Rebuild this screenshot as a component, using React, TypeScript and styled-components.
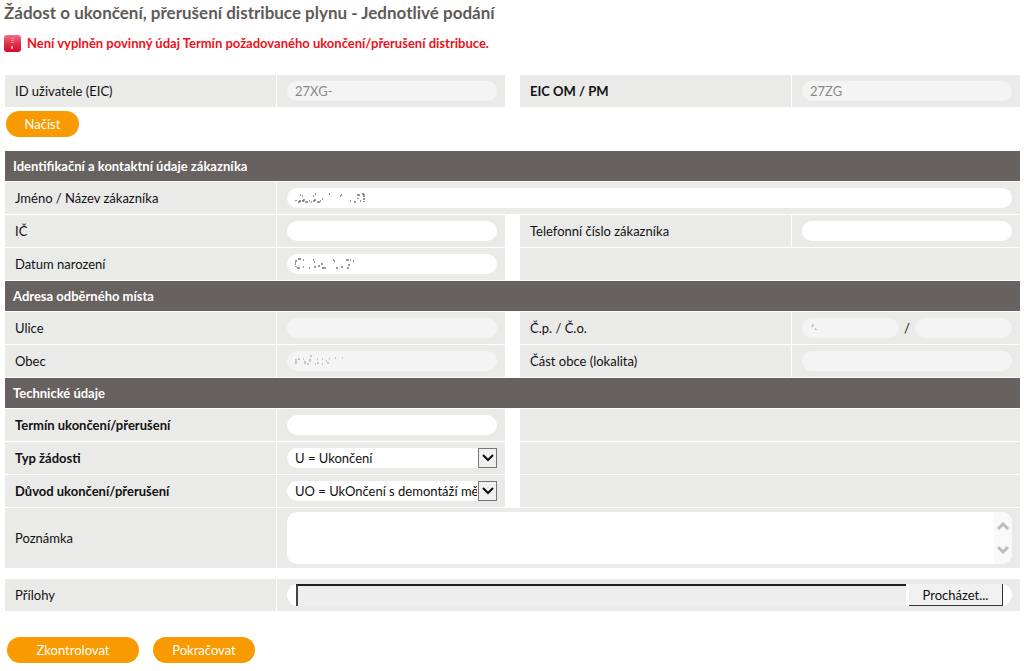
import React from 'react';
import styled, { createGlobalStyle } from 'styled-components';

const GlobalStyle = createGlobalStyle`
  *, *::before, *::after { box-sizing: border-box; }
  body {
    margin: 0;
    background: #fff;
    color: #111;
    font: 13px/16px Lato, 'Open Sans', sans-serif;
  }
  input, select, textarea, button { font: inherit; color: inherit; }
`;

const Page = styled.main`
  padding: 4px 4px 8px;
`;

const Form = styled.form`
  padding-left: 1px;
`;

const Title = styled.h1`
  margin: 0;
  color: #5f5b58;
  font-size: 17px;
  line-height: 18px;
  font-weight: 700;
`;

const Alert = styled.p`
  display: flex;
  align-items: center;
  gap: 6px;
  margin: 12px 0 23px;
  color: #f0101a;
  font-weight: 700;
  line-height: 18px;
`;

const Row = styled.div<{ $tall?: boolean }>`
  display: grid;
  grid-template-columns:
    minmax(0, 272fr) minmax(0, 228fr) 15px minmax(0, 272fr) minmax(0, 228fr);
  min-height: ${(p) => (p.$tall ? 60 : 32)}px;
  margin-bottom: 1px;
`;

const LabelCell = styled.label<{ $strong?: boolean; $second?: boolean }>`
  display: flex;
  align-items: center;
  grid-column: ${(p) => (p.$second ? 4 : 1)};
  padding: 0 10px;
  border-right: 1px solid #fff;
  background: #eaeae9;
  font-weight: ${(p) => (p.$strong ? 700 : 400)};
`;

const FieldCell = styled.div<{ $wide?: boolean; $second?: boolean }>`
  display: flex;
  align-items: center;
  position: relative;
  grid-column: ${(p) => (p.$wide ? '2 / -1' : p.$second ? '5' : '2')};
  gap: 5px;
  padding: 0 8px 0 10px;
  background: #eaeae9;
`;

const EmptyCell = styled.div`
  grid-column: 4 / -1;
  background: #eaeae9;
`;

const SectionBar = styled.h2`
  margin: 0 0 1px;
  padding: 0 8px;
  background: #67625f;
  color: #fff;
  font-size: 13px;
  line-height: 30px;
  font-weight: 700;
`;

const TextInput = styled.input`
  flex: 1;
  width: 0;
  min-width: 0;
  height: 20px;
  padding: 0 8px;
  border: 0;
  border-radius: 10px;
  outline: 0;
  background: #fff;

  &:disabled {
    background: #f4f4f4;
    color: #8a8a8a;
  }
`;

const SelectBox = styled.div`
  display: flex;
  flex: 1;
  min-width: 0;
  height: 20px;
  border-radius: 10px 0 0 10px;
  background: #fff;
  position: relative;
`;

const Select = styled.select`
  appearance: none;
  width: 100%;
  padding: 0 20px 0 8px;
  border: 0;
  outline: 0;
  background: transparent;
`;

const SelectArrow = styled.span`
  display: grid;
  place-items: center;
  position: absolute;
  inset: 0 0 0 auto;
  width: 19px;
  border: 1px solid #77777a;
  background: #f0f0f0;
  pointer-events: none;
`;

const NoteBox = styled.div`
  display: flex;
  flex: 1;
  height: 52px;
  overflow: hidden;
  border-radius: 10px;
  background: #fff;
`;

const Note = styled.textarea`
  flex: 1;
  padding: 2px 8px;
  border: 0;
  outline: 0;
  resize: none;
  background: transparent;
`;

const ScrollTrack = styled.div`
  display: flex;
  flex-direction: column;
  align-items: center;
  justify-content: space-between;
  width: 18px;
  padding: 10px 0;
  background: #f9f9f9;
`;

const FileBox = styled.div`
  display: flex;
  flex: 1;
  gap: 3px;
  height: 22px;
  padding: 0 9px;
  border-radius: 11px;
  background: #fff;
`;

const FileName = styled.input`
  flex: 1;
  min-width: 0;
  border: 0;
  border-top: 2px solid #222;
  border-left: 2px solid #444;
  outline: 0;
  background: #eee;
`;

const BrowseButton = styled.button`
  width: 94px;
  padding: 0;
  border: 0;
  border-right: 1px solid #333;
  border-bottom: 1px solid #333;
  background: #f0f0f0;
`;

const PillButton = styled.button<{ $width: number }>`
  width: ${(p) => p.$width}px;
  height: 26px;
  padding: 0;
  border: 0;
  border-radius: 13px;
  background: #f89a00;
  color: #fff;
`;

const LoadBar = styled.div`
  display: flex;
  padding: 3px 1px 14px;
`;

const Attachments = styled.div`
  margin-top: 11px;
`;

const Actions = styled.div`
  display: flex;
  gap: 14px;
  padding: 25px 2px 0;
`;

const Smudge = styled.svg`
  position: absolute;
  left: 18px;
  top: 50%;
  transform: translateY(-50%);
  pointer-events: none;
`;

/* Remains of blanked-out personal data inside a field. */
const marks = {
  name: 'M1 10v1M3 12h2M5 10v2M7 11h2M9 9v2M10 12h3M14 11h1M16 12h1M18 11h2M20 9v2M22 12h3M25 11h1M27 9h1M5 5h1M7 6h1M18 6h1M20 4h1M34 4h1M46 5h1M45 6h1M55 11h1M59 12h2M62 5h3M63 8v1M65 11h1M67 4h2M69 4v3M68 9h2M69 11v1',
  born: 'M3 3h3M1 4v2M0 6v3M1 10v1M2 12h3M8 4h1M8 11h1M14 12h1M18 4h1M19 6h1M19 11h2M24 9v2M26 8h2M27 12h4M38 4h1M39 5h1M41 12h2M46 11h2M51 4h3M55 4h1M54 8v2M52 12h2M58 5h1',
  town: 'M1 6v5M3 6h2M8 6h1M10 8v3M12 11h2M15 6v3M16 2v2M20 11h1M22 6h1M23 9v2M27 6h1M27 11h1M31 8h1M32 10h2M34 6h1M40 5h1M47 5h1',
  house: 'M3 4v2M2 6v1M5 9h1M6 9v1',
};

const Remains = ({ kind, light }: { kind: keyof typeof marks; light?: boolean }) => (
  <Smudge width="72" height="16" viewBox="0 0 72 16" aria-hidden="true">
    <path d={marks[kind]} stroke={light ? '#999' : '#333'} fill="none" />
  </Smudge>
);

const Chevron = ({ up, pale }: { up?: boolean; pale?: boolean }) => (
  <svg width="12" height="8" viewBox="0 0 12 8" aria-hidden="true">
    <path
      d={up ? 'M1 7l5-5 5 5' : 'M1 1l5 5 5-5'}
      fill="none"
      stroke={pale ? '#bdbdbd' : '#111'}
      strokeWidth={pale ? 3 : 2}
    />
  </svg>
);

const AlertIcon = () => (
  <svg width="17" height="17" viewBox="0 0 17 17" aria-hidden="true">
    <defs>
      <linearGradient id="alertFill" x1="0" y1="0" x2="0" y2="1">
        <stop offset="0" stopColor="#ef7187" />
        <stop offset="0.5" stopColor="#e2304d" />
        <stop offset="1" stopColor="#d5082a" />
      </linearGradient>
    </defs>
    <rect width="17" height="17" rx="3" fill="url(#alertFill)" />
    <path d="M7 3.5h3M7 5.5h3M7 7.5h3" stroke="#f08c9c" />
    <rect x="7" y="11" width="2" height="3" rx="1" fill="#f9cdd4" />
  </svg>
);

type FieldProps = {
  id: string;
  label: string;
  strong?: boolean;
  second?: boolean;
  wide?: boolean;
  children: React.ReactNode;
};

const Field = ({ id, label, strong, second, wide, children }: FieldProps) => (
  <>
    <LabelCell htmlFor={id} $strong={strong} $second={second}>{label}</LabelCell>
    <FieldCell $second={second} $wide={wide}>{children}</FieldCell>
  </>
);

const DropDown = ({ id, option }: { id: string; option: string }) => (
  <SelectBox>
    <Select id={id}><option>{option}</option></Select>
    <SelectArrow><Chevron /></SelectArrow>
  </SelectBox>
);

export default function App() {
  return (
    <Page>
      <GlobalStyle />
      <Title>Žádost o ukončení, přerušení distribuce plynu - Jednotlivé podání</Title>
      <Alert role="alert">
        <AlertIcon />
        Není vyplněn povinný údaj Termín požadovaného ukončení/přerušení distribuce.
      </Alert>

      <Form onSubmit={(e) => e.preventDefault()}>
        <Row>
          <Field id="user" label="ID uživatele (EIC)"><TextInput id="user" disabled defaultValue="27XG-" /></Field>
          <Field id="eic" label="EIC OM / PM" strong second><TextInput id="eic" disabled defaultValue="27ZG" /></Field>
        </Row>
        <LoadBar><PillButton type="button" $width={73}>Načíst</PillButton></LoadBar>

        <SectionBar>Identifikační a kontaktní údaje zákazníka</SectionBar>
        <Row>
          <Field id="name" label="Jméno / Název zákazníka" wide><TextInput id="name" /><Remains kind="name" /></Field>
        </Row>
        <Row>
          <Field id="ic" label="IČ"><TextInput id="ic" /></Field>
          <Field id="phone" label="Telefonní číslo zákazníka" second><TextInput id="phone" /></Field>
        </Row>
        <Row>
          <Field id="born" label="Datum narození"><TextInput id="born" /><Remains kind="born" /></Field>
          <EmptyCell />
        </Row>

        <SectionBar>Adresa odběrného místa</SectionBar>
        <Row>
          <Field id="street" label="Ulice"><TextInput id="street" disabled /></Field>
          <Field id="house" label="Č.p. / Č.o." second>
            <TextInput id="house" disabled />
            <span>/</span>
            <TextInput aria-label="Č.o." disabled />
            <Remains kind="house" light />
          </Field>
        </Row>
        <Row>
          <Field id="town" label="Obec"><TextInput id="town" disabled /><Remains kind="town" light /></Field>
          <Field id="part" label="Část obce (lokalita)" second><TextInput id="part" disabled /></Field>
        </Row>

        <SectionBar>Technické údaje</SectionBar>
        <Row>
          <Field id="date" label="Termín ukončení/přerušení" strong><TextInput id="date" /></Field>
          <EmptyCell />
        </Row>
        <Row>
          <Field id="type" label="Typ žádosti" strong><DropDown id="type" option="U = Ukončení" /></Field>
          <EmptyCell />
        </Row>
        <Row>
          <Field id="reason" label="Důvod ukončení/přerušení" strong>
            <DropDown id="reason" option="UO = UkOnčení s demontáží měřidla" />
          </Field>
          <EmptyCell />
        </Row>
        <Row $tall>
          <Field id="note" label="Poznámka" wide>
            <NoteBox>
              <Note id="note" />
              <ScrollTrack><Chevron up pale /><Chevron pale /></ScrollTrack>
            </NoteBox>
          </Field>
        </Row>

        <Attachments>
          <Row>
            <Field id="file" label="Přílohy" wide>
              <FileBox>
                <FileName id="file" readOnly />
                <BrowseButton type="button">Procházet...</BrowseButton>
              </FileBox>
            </Field>
          </Row>
        </Attachments>

        <Actions>
          <PillButton type="submit" $width={132}>Zkontrolovat</PillButton>
          <PillButton type="submit" $width={102}>Pokračovat</PillButton>
        </Actions>
      </Form>
    </Page>
  );
}
